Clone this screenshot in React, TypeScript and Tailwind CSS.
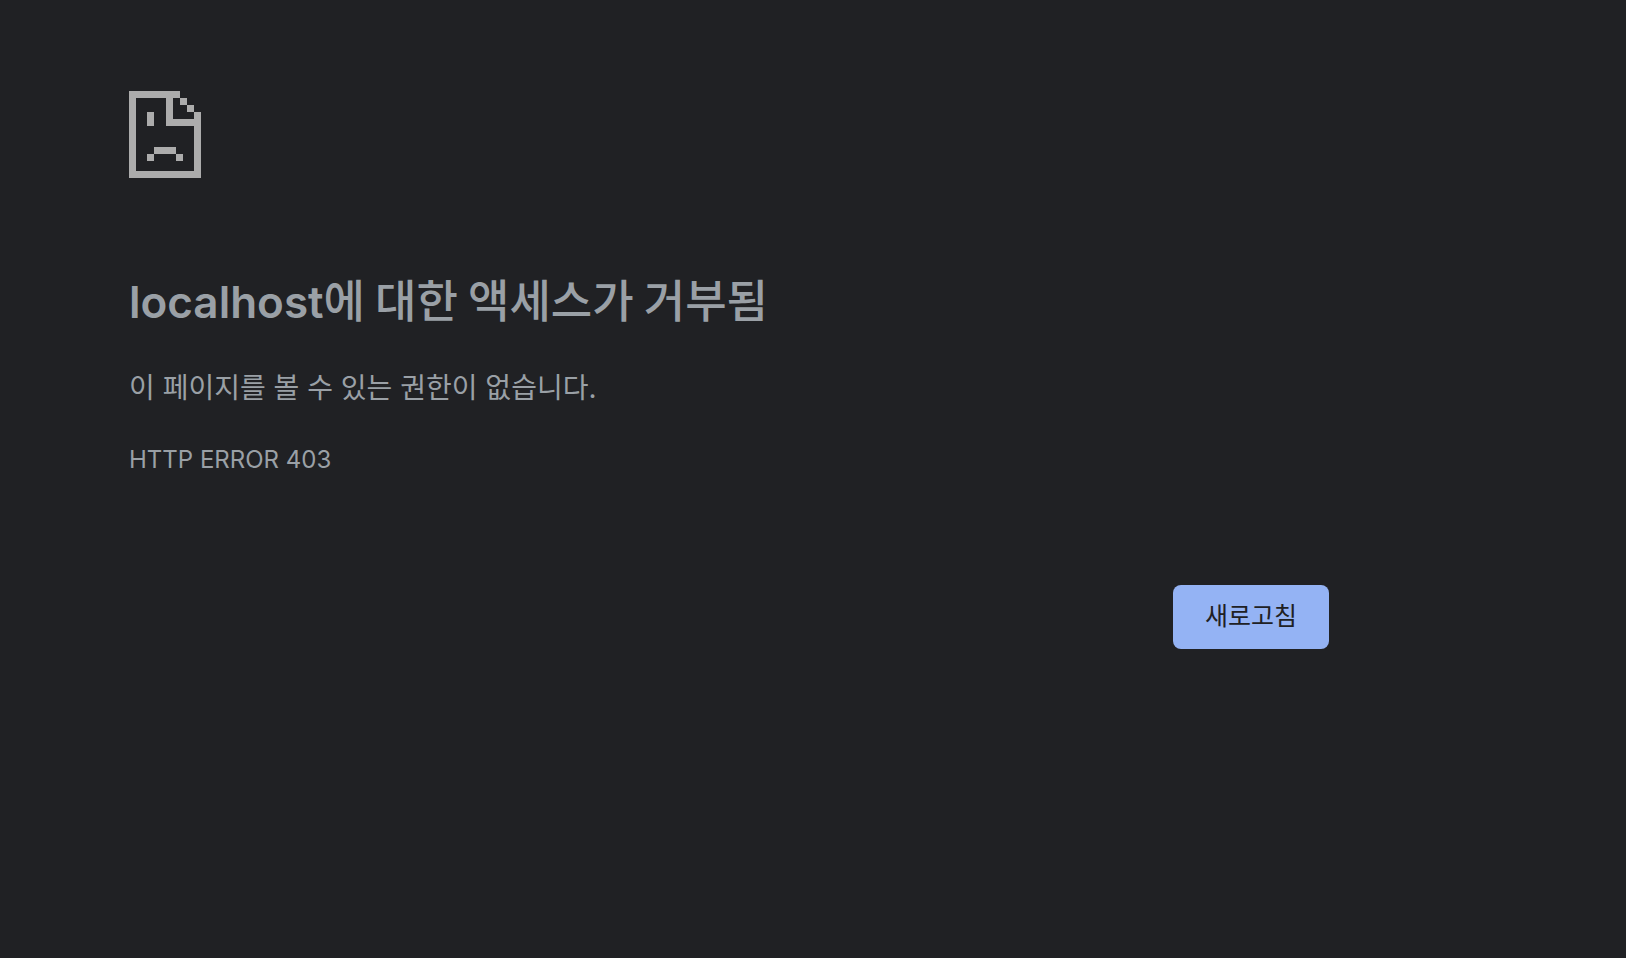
const SadPageIcon = () => (
  <svg
    aria-hidden="true"
    width="72"
    height="87"
    viewBox="0 0 72 87"
    shapeRendering="crispEdges"
    className="fill-[#acacac]"
  >
    {/* page outline and folded corner */}
    <path d="M0 0H51V7H44V28H65V21H72V87H0ZM7 7V80H65V35H37V7Z" />
    <path d="M51 7H58V14H51ZM58 14H65V21H58Z" />
    {/* eye */}
    <path d="M18 21H25V35H18Z" />
    {/* mouth */}
    <path d="M25 56H47V63H25ZM18 63H25V70H18ZM47 63H54V70H47Z" />
  </svg>
);

const App = () => {
  return (
    <div className="min-h-screen bg-[#202124] px-6 pt-[91px] pb-16 font-['Inter','Noto_Sans_CJK_KR',sans-serif] text-[#9aa0a6] md:pl-[129px]">
      <main className="max-w-[1200px]">
        <SadPageIcon />
        <h1 className="mt-[89px] font-['Noto_Sans_CJK_KR',sans-serif] text-[45px] leading-[64px] font-medium">
          <span className="font-['Inter',sans-serif] text-[44px] font-semibold">
            localhost
          </span>
          에 대한 액세스가 거부됨
        </h1>
        <p className="mt-[30px] text-[28px] leading-[48px]">
          이 페이지를 볼 수 있는 권한이 없습니다.
        </p>
        <p className="mt-8 text-2xl leading-8">HTTP ERROR 403</p>
        <div className="mt-[109px] flex justify-end">
          <button
            type="button"
            onClick={() => window.location.reload()}
            className="h-16 cursor-pointer rounded-lg bg-[#94b3f4] px-8 text-[25px] text-[#202124]"
          >
            새로고침
          </button>
        </div>
      </main>
    </div>
  );
};

export default App;
